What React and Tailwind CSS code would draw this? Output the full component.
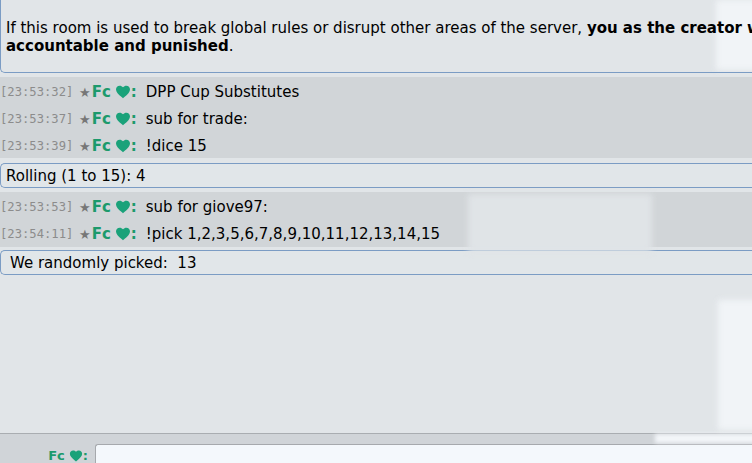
import React from "react";

const sans = { fontFamily: "Verdana, 'DejaVu Sans', sans-serif" };

const messages1 = [
  { time: "23:53:32", text: "DPP Cup Substitutes" },
  { time: "23:53:37", text: "sub for trade:" },
  { time: "23:53:39", text: "!dice 15" },
];

const messages2 = [
  { time: "23:53:53", text: "sub for giove97:" },
  { time: "23:54:11", text: "!pick 1,2,3,5,6,7,8,9,10,11,12,13,14,15" },
];

const Heart = ({ className }) => (
  <svg viewBox="0 0 24 24" className={className} fill="currentColor">
    <path d="M12 21.5l-1.6-1.45C4.8 15 1.5 12 1.5 8.1 1.5 5 3.9 2.6 7 2.6c1.9 0 3.7.9 5 2.3 1.3-1.4 3.1-2.3 5-2.3 3.1 0 5.5 2.4 5.5 5.5 0 3.9-3.3 6.9-8.9 11.95L12 21.5z" />
  </svg>
);

const ChatLine = ({ time, text }) => (
  <div className="h-[27px] pt-[3px] flex items-center whitespace-nowrap">
    <span className="text-[12.2px] text-[#8c8c8c] font-['DejaVu_Sans_Mono',monospace] w-[79px]">
      [{time}]
    </span>
    <span className="text-[#777] text-[13px] leading-none">★</span>
    <span className="text-[#1c9a6c] font-bold text-[15px] ml-[1px]">Fc</span>
    <Heart className="w-[16px] h-[16px] text-[#1aa27a] ml-[4px]" />
    <span className="text-[#1c9a6c] font-bold text-[15px]">:</span>
    <span className="ml-[9px] text-[15px] text-black">{text}</span>
  </div>
);

const Notice = ({ children, className }) => (
  <div
    className={
      "w-[760px] border-y border-l border-[#7b9cc4] rounded-l-[5px] bg-[#e1e6e9] h-[25px] pt-[2px] flex items-center text-[15px] text-black " +
      className
    }
  >
    {children}
  </div>
);

export default function App() {
  return (
    <div
      className="relative w-[752px] h-[463px] overflow-hidden bg-[#e1e5e8] flex flex-col"
      style={sans}
    >
      {/* blurred patch behind the notice text */}
      <div className="absolute left-[716px] top-0 w-[60px] h-[70px] bg-[#f1f4f7] blur-[3px]" />

      <div className="relative z-10 w-[760px] border-b border-l border-[#7b9cc4] rounded-bl-[5px] pl-[5px] pt-[19px] pb-[17px] text-[15px] leading-[18px] text-black shrink-0">
        <div className="whitespace-nowrap">
          If this room is used to break global rules or disrupt other areas of the server,{" "}
          <b>you as the creator will be held</b>
        </div>
        <div>
          <b>accountable and punished</b>.
        </div>
      </div>

      <div className="mt-[4px] bg-[#d1d5d8]">
        {messages1.map((m) => (
          <ChatLine key={m.time} {...m} />
        ))}
      </div>

      <Notice className="mt-[5px] pl-[5px]">Rolling (1 to 15): 4</Notice>

      <div className="mt-[4px] h-[55px] bg-[#d1d5d8]">
        {messages2.map((m) => (
          <ChatLine key={m.time} {...m} />
        ))}
      </div>

      <Notice className="mt-[3px] pl-[9px]">We randomly picked:&nbsp; 13</Notice>

      <div className="flex-1" />

      <div className="h-[30px] shrink-0 border-t border-[#a9adb1] bg-[#d0d4d8] flex items-end">
        <div className="w-[95px] pr-[7px] flex justify-end items-center leading-[14px] text-[#1c9a6c] font-bold text-[13px]">
          Fc
          <Heart className="w-[14px] h-[14px] text-[#1aa27a] ml-[4px]" />
          :
        </div>
        <div className="flex-1 h-[19px] bg-[#f4f8fc] border-t border-l border-[#a6a9ad] rounded-tl-[3px]" />
      </div>

      {/* blurred overlays seen in the capture */}
      <div className="absolute left-[468px] top-[194px] w-[184px] h-[58px] bg-[#e0e4e7] blur-[3px]" />
      <div className="absolute left-[718px] top-[300px] w-[60px] h-[130px] bg-[#f1f4f7] blur-[3px]" />
      <div className="absolute left-[655px] top-[434px] w-[120px] h-[9px] bg-[#f3f6f9] blur-[2px]" />
    </div>
  );
}
